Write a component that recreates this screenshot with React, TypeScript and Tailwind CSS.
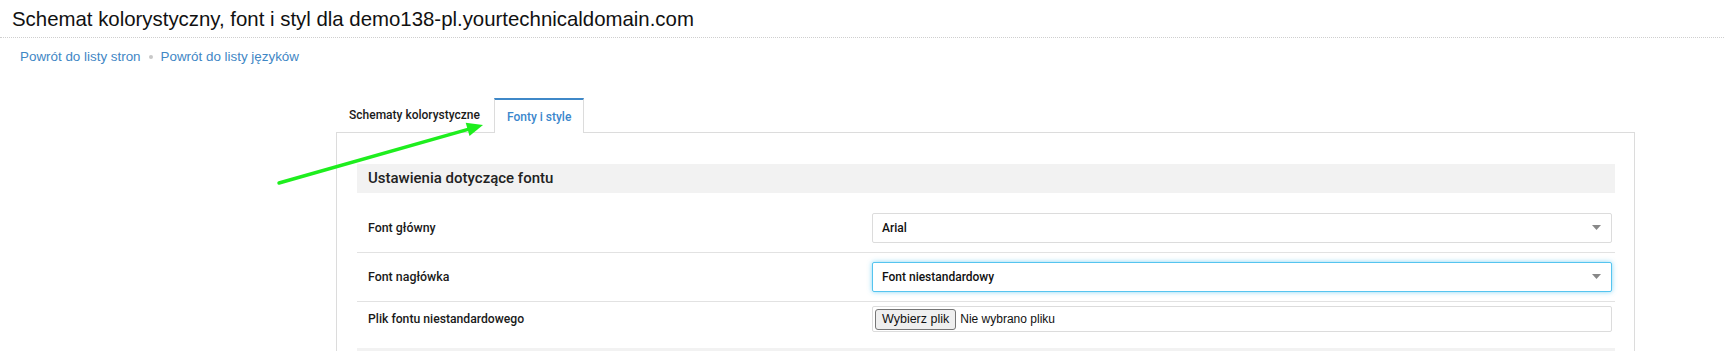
import React from "react";

const roboto = { fontFamily: "Roboto, 'Liberation Sans', sans-serif" };

function Caret() {
  return (
    <svg width="9" height="6" viewBox="0 0 9 6" className="absolute right-[10px] top-1/2 -translate-y-1/2">
      <polygon points="0,0 9,0 4.5,5" fill="#888" />
    </svg>
  );
}

function SelectBox({ value, focused }: { value: string; focused?: boolean }) {
  return (
    <div
      className={
        focused
          ? "relative h-[30px] rounded-[2px] border border-[#55c4ef] bg-white pl-[9px] flex items-center text-[12px] font-medium text-[#111] shadow-[0_0_5px_rgba(85,196,239,0.7)]"
          : "relative h-[30px] rounded-[2px] border border-[#dcdcdc] bg-white pl-[9px] flex items-center text-[12px] font-medium text-[#111]"
      }
    >
      {value}
      <Caret />
    </div>
  );
}

export default function App() {
  return (
    <div className="relative h-[351px] bg-white overflow-hidden" style={{ fontFamily: "'Liberation Sans', Arial, sans-serif" }}>
      {/* title */}
      <h1 className="px-[12px] pt-[7px] pb-[6px] text-[20.4px] leading-[24px] text-[#111] border-b border-dotted border-[#cfcfcf]">
        Schemat kolorystyczny, font i styl dla demo138-pl.yourtechnicaldomain.com
      </h1>

      {/* breadcrumbs */}
      <div className="flex items-center pl-[20px] pt-[10px] text-[13.4px] leading-[18px] text-[#3f87c5]">
        <a>Powrót do listy stron</a>
        <span className="mx-[8px] inline-block w-[4px] h-[4px] rounded-full bg-[#c8c8c8]" />
        <a>Powrót do listy języków</a>
      </div>

      {/* tabs + panel */}
      <div className="ml-[336px] mt-[32px] w-[1299px]" style={roboto}>
        <div className="flex h-[34px] items-stretch">
          <div className="flex items-center px-[13px] text-[12px] font-medium text-[#1a1a1a]">
            Schematy kolorystyczne
          </div>
          <div className="relative z-10 -mb-px ml-px flex items-center px-[12px] border-x border-[#dcdcdc] border-t-2 border-t-[#3f88c8] bg-white text-[12px] font-medium text-[#3b87cc]">
            Fonty i style
          </div>
        </div>

        <div className="border border-[#dcdcdc] pl-[20px] pr-[19px] pt-[31px]">
          <div className="h-[29px] bg-[#f2f2f2] pl-[11px] flex items-center text-[15px] font-medium text-[#222]">
            Ustawienia dotyczące fontu
          </div>

          <div className="pt-[10px]">
            <div className="grid grid-cols-[515px_1fr] items-center pr-[3px] pt-[10px] pb-[9px] border-b border-[#e2e2e2]">
              <div className="pl-[11px] text-[12.4px] font-medium text-[#1a1a1a]">Font główny</div>
              <SelectBox value="Arial" />
            </div>
            <div className="grid grid-cols-[515px_1fr] items-center pr-[3px] pt-[9px] pb-[9px] border-b border-[#e2e2e2]">
              <div className="pl-[11px] text-[12.4px] font-medium text-[#1a1a1a]">Font nagłówka</div>
              <SelectBox value="Font niestandardowy" focused />
            </div>
            <div className="grid grid-cols-[515px_1fr] items-center pr-[3px] pt-[4px] pb-[16px]">
              <div className="pl-[11px] text-[12.2px] font-medium text-[#1a1a1a]">Plik fontu niestandardowego</div>
              <div className="h-[26px] rounded-[2px] border border-[#dcdcdc] bg-white flex items-center pl-[2px] text-[12.5px] text-[#111]" style={{ fontFamily: "'Liberation Sans', Arial, sans-serif" }}>
                <span className="h-[21px] px-[6px] flex items-center rounded-[3px] border border-[#767676] bg-[#efefef] text-[#111]">
                  Wybierz plik
                </span>
                <span className="ml-[4px] text-[12px]">Nie wybrano pliku</span>
              </div>
            </div>
            <div className="h-[29px] bg-[#f2f2f2]" />
          </div>
        </div>
      </div>

      {/* annotation arrow */}
      <svg className="absolute left-0 top-0 pointer-events-none" width="1724" height="351">
        <line x1="279" y1="183" x2="468" y2="129.4" stroke="#1eee1e" strokeWidth="3.4" strokeLinecap="round" />
        <polygon points="483,125 469.5,136.1 465.7,122.7" fill="#1eee1e" />
      </svg>
    </div>
  );
}
